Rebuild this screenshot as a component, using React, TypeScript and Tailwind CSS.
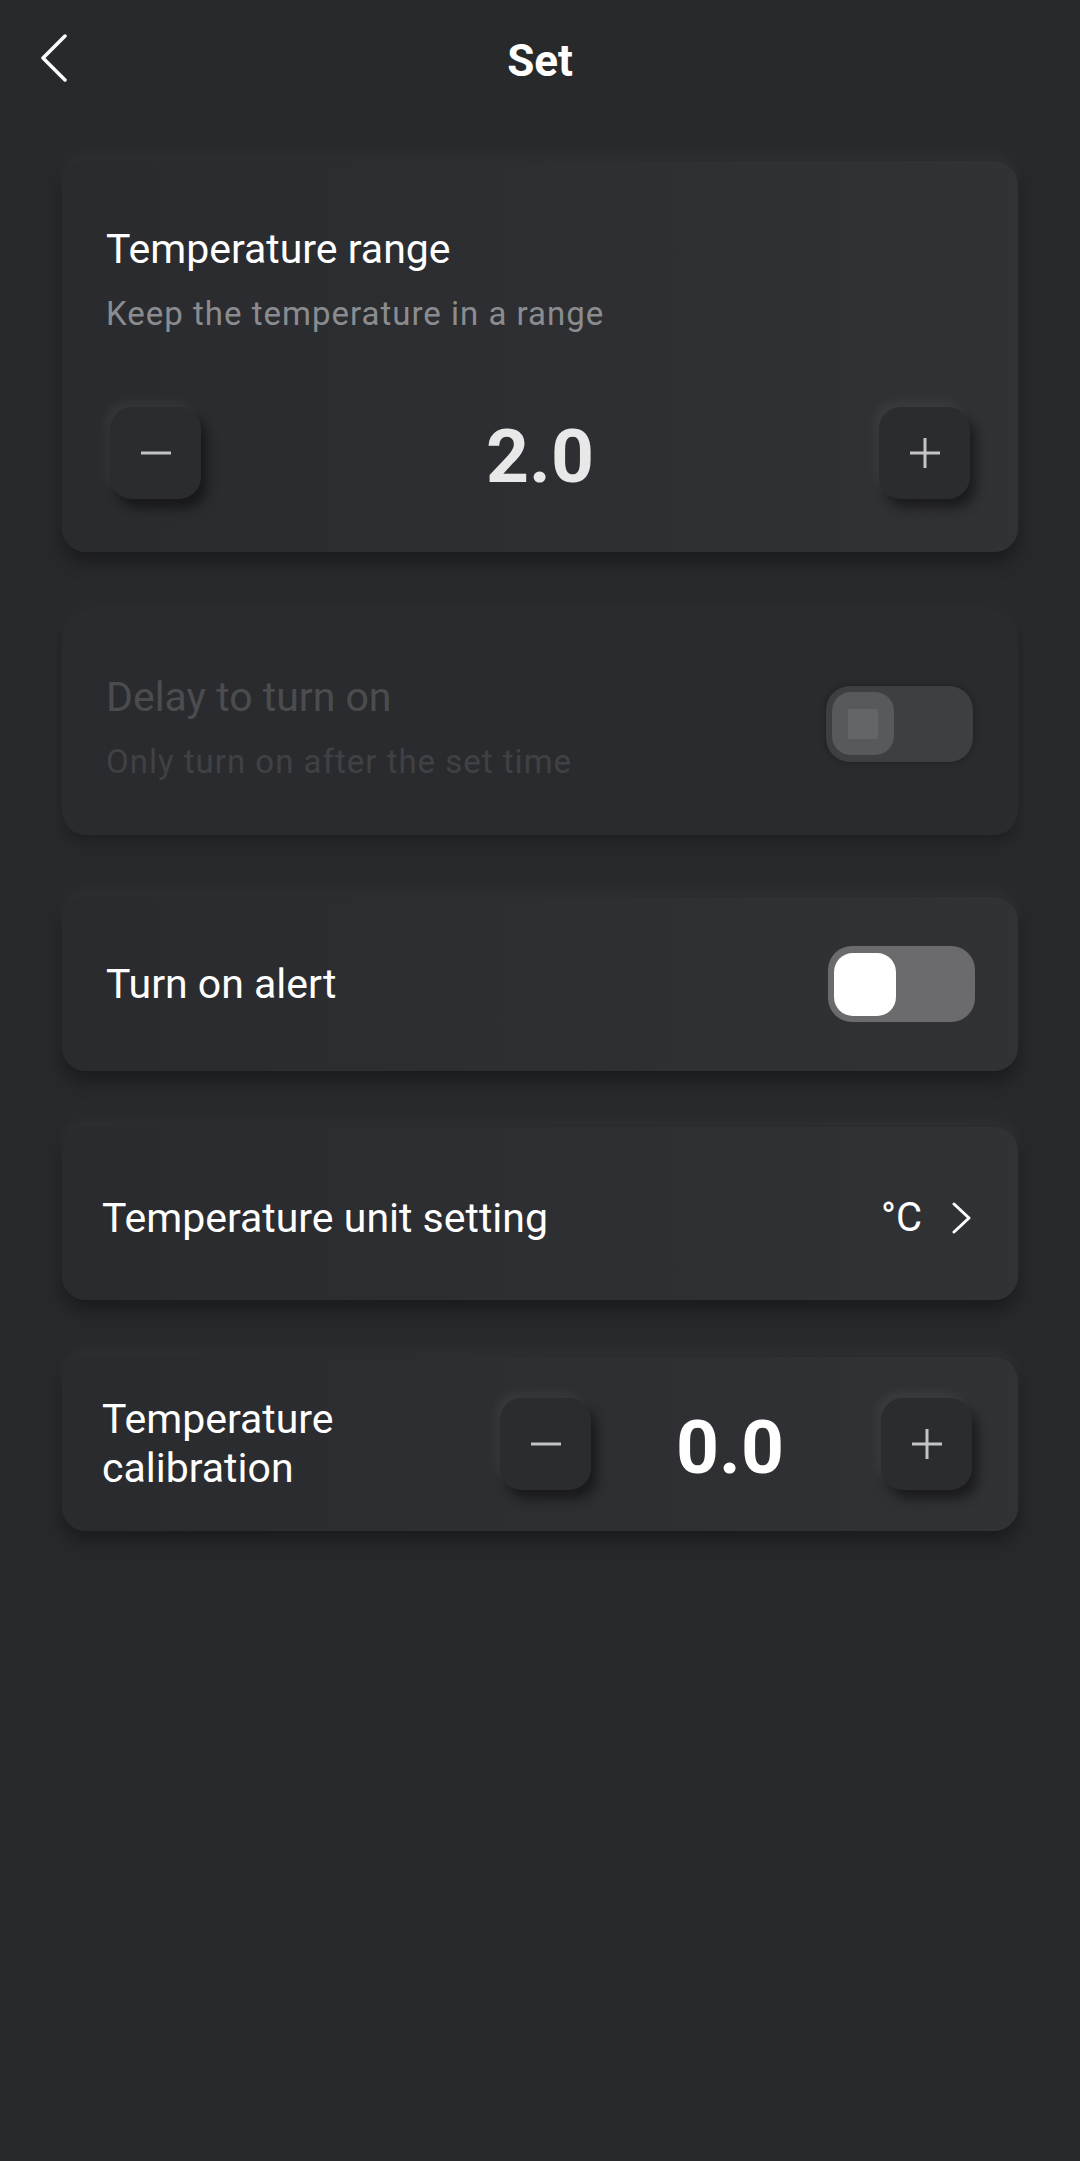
import React, { useState } from 'react';

const font = { fontFamily: 'Roboto, "Noto Sans", Arial, sans-serif' };

const cardShadow =
  'shadow-[0_-8px_14px_rgba(255,255,255,0.035),0_10px_18px_rgba(0,0,0,0.35)]';

const StepButton: React.FC<{ kind: 'minus' | 'plus'; onClick: () => void }> = ({ kind, onClick }) => (
  <button
    type="button"
    onClick={onClick}
    className="w-[91px] h-[92px] shrink-0 rounded-[22px] bg-[#2b2c2f] flex items-center justify-center shadow-[-5px_-6px_10px_rgba(255,255,255,0.05),6px_9px_12px_rgba(0,0,0,0.45)]"
  >
    <svg width="32" height="32" viewBox="0 0 32 32" fill="none">
      <line x1="1" y1="16" x2="31" y2="16" stroke="#c4c4c6" strokeWidth="3" />
      {kind === 'plus' && <line x1="16" y1="1" x2="16" y2="31" stroke="#c4c4c6" strokeWidth="3" />}
    </svg>
  </button>
);

const Toggle: React.FC<{ on: boolean; disabled?: boolean; onClick?: () => void }> = ({ on, disabled, onClick }) => (
  <button
    type="button"
    onClick={onClick}
    className={
      'w-[147px] h-[76px] shrink-0 rounded-[24px] p-[6px] flex items-center ' +
      (disabled ? 'bg-[#3e3f43] shadow-[0_0_6px_rgba(0,0,0,0.3)]' : 'bg-[#6b6b6e]')
    }
  >
    <div
      className={
        'w-[62px] h-[63px] rounded-[19px] flex items-center justify-center ' +
        (disabled ? 'bg-[#58595c]' : 'bg-white') +
        (on ? ' ml-auto' : '')
      }
    >
      {disabled && <div className="w-[30px] h-[30px] bg-[#646568]" />}
    </div>
  </button>
);

export default function App() {
  const [range, setRange] = useState(2.0);
  const [calib, setCalib] = useState(0.0);
  const [alert, setAlert] = useState(false);

  return (
    <div className="min-h-[2161px] w-full bg-[#28292b] text-white" style={font}>
      {/* header */}
      <div className="relative h-[120px] flex items-center justify-center">
        <button type="button" className="absolute left-[40px] top-[34px]">
          <svg width="28" height="48" viewBox="0 0 28 48" fill="none">
            <polyline points="25,2 3,24 25,46" stroke="white" strokeWidth="3.5" strokeLinecap="round" strokeLinejoin="round" />
          </svg>
        </button>
        <h1 className="text-[44px] leading-[52px] font-bold mt-[2px]">Set</h1>
      </div>

      <div className="px-[62px] pt-[41px] flex flex-col">
        {/* Temperature range */}
        <div className={`h-[391px] rounded-[24px] bg-gradient-to-r from-[#2a2b2e] to-[#313236] pt-[66px] px-[44px] ${cardShadow}`}>
          <div className="text-[41px] leading-[44px]">Temperature range</div>
          <div className="text-[33px] leading-[36px] tracking-[1px] text-[#8b8c8f] mt-[25px]">Keep the temperature in a range</div>
          <div className="flex items-center justify-between mt-[75px] -mx-[-4px]">
            <StepButton kind="minus" onClick={() => setRange(Math.max(0, range - 0.5))} />
            <span className="text-[75px] leading-[80px] font-bold text-[#e8e8e9] mt-[6px]">{range.toFixed(1)}</span>
            <StepButton kind="plus" onClick={() => setRange(range + 0.5)} />
          </div>
        </div>

        {/* Delay to turn on (disabled) */}
        <div className="mt-[60px] h-[223px] rounded-[24px] bg-[#2a2b2e] pl-[44px] pr-[45px] flex items-center justify-between shadow-[0_-6px_12px_rgba(255,255,255,0.02),0_8px_14px_rgba(0,0,0,0.2)]">
          <div className="mt-[8px]">
            <div className="text-[41px] leading-[44px] text-[#4b4c4f]">Delay to turn on</div>
            <div className="text-[33px] leading-[36px] tracking-[1px] text-[#404144] mt-[25px]">Only turn on after the set time</div>
          </div>
          <Toggle on={false} disabled />
        </div>

        {/* Turn on alert */}
        <div className={`mt-[62px] h-[174px] rounded-[24px] bg-gradient-to-r from-[#2a2b2e] to-[#313236] pl-[44px] pr-[43px] flex items-center justify-between ${cardShadow}`}>
          <div className="text-[41px] leading-[44px]">Turn on alert</div>
          <Toggle on={alert} onClick={() => setAlert(!alert)} />
        </div>

        {/* Temperature unit setting */}
        <div className={`mt-[56px] h-[173px] rounded-[24px] bg-gradient-to-r from-[#2a2b2e] to-[#313236] pl-[40px] pr-[46px] flex items-center justify-between ${cardShadow}`}>
          <div className="text-[41px] leading-[44px] mt-[8px]">Temperature unit setting</div>
          <div className="flex items-center gap-[30px] mt-[8px]">
            <span className="text-[40px] leading-[44px]">°C</span>
            <svg width="20" height="32" viewBox="0 0 20 32" fill="none">
              <polyline points="2,2 17,16 2,30" stroke="white" strokeWidth="3" strokeLinecap="round" strokeLinejoin="round" />
            </svg>
          </div>
        </div>

        {/* Temperature calibration */}
        <div className={`mt-[57px] h-[174px] rounded-[24px] bg-gradient-to-r from-[#2a2b2e] to-[#313236] pl-[40px] pr-[46px] flex items-center ${cardShadow}`}>
          <div className="flex-1 text-[41px] leading-[49px]">
            Temperature
            <br />
            calibration
          </div>
          <div className="flex items-center">
            <StepButton kind="minus" onClick={() => setCalib(calib - 0.5)} />
            <span className="w-[290px] pr-[12px] text-center text-[75px] leading-[80px] font-bold text-white mt-[6px]">{calib.toFixed(1)}</span>
            <StepButton kind="plus" onClick={() => setCalib(calib + 0.5)} />
          </div>
        </div>
      </div>
    </div>
  );
}
